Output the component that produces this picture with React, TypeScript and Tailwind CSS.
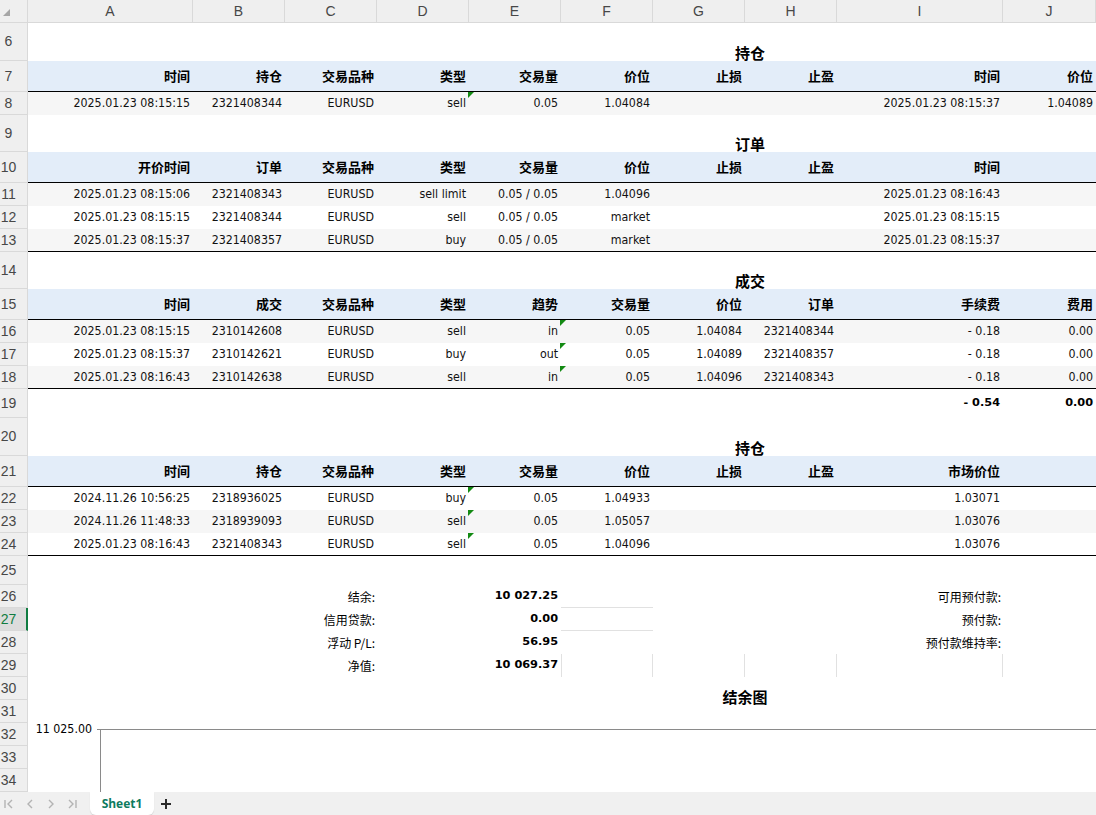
import React from 'react';

// column widths of A..J, in px
const GRID = 'grid grid-cols-[165px_92px_92px_92px_92px_92px_92px_92px_166px_93px]';
const LETTERS = ['A', 'B', 'C', 'D', 'E', 'F', 'G', 'H', 'I', 'J'];

const DATA_FONT = "font-['DejaVu_Sans_Condensed','DejaVu_Sans','Noto_Sans_CJK_SC',sans-serif] text-[12.3px] text-[#111]";
const HEAD_FONT = "font-['Noto_Sans_CJK_SC',sans-serif] font-bold text-[13px] text-black";
const UI_FONT = "font-['Liberation_Sans',Arial,sans-serif] text-[14px] text-[#474747]";

type CellVal = string | { t: string; b?: boolean; m?: boolean; cls?: string };

/** Small green triangle Excel paints in a cell corner */
const Marker = () => (
  <svg className="absolute top-0 right-[-5px] z-10" width="6" height="6" viewBox="0 0 6 6">
    <polygon points="0,0 6,0 0,6" fill="#138a13" />
  </svg>
);

const Cell: React.FC<{ v?: CellVal; head?: boolean }> = ({ v, head }) => {
  if (v === undefined || v === '') return <div />;
  const c = typeof v === 'string' ? { t: v } : v;
  const font = head
    ? HEAD_FONT
    : c.b
      ? "font-['DejaVu_Sans','Noto_Sans_CJK_SC',sans-serif] font-bold text-[11.3px] text-black"
      : DATA_FONT;
  return (
    <div className={`relative flex items-center justify-end pr-[3px] whitespace-nowrap ${font} ${c.cls ?? ''}`}>
      {c.t}
      {c.m && <Marker />}
    </div>
  );
};

const RowNum: React.FC<{ n: number; sel?: boolean }> = ({ n, sel }) => (
  <div
    className={`w-[28px] shrink-0 box-border flex items-center border-b border-[#d9d9d9] ${
      sel ? 'bg-[#dcdcdc] border-r-2 border-r-[#107c41]' : 'bg-[#efefef] border-r'
    }`}
  >
    <span
      className={`w-[17px] text-center font-['Liberation_Sans',Arial,sans-serif] text-[14px] ${
        sel ? 'text-[#107c41]' : 'text-[#474747]'
      }`}
    >
      {n}
    </span>
  </div>
);

const Row: React.FC<{ n: number; h: string; sel?: boolean; cls?: string; children?: React.ReactNode }> = ({
  n,
  h,
  sel,
  cls = '',
  children,
}) => (
  <div className={`flex ${h}`}>
    <RowNum n={n} sel={sel} />
    <div className={`flex-1 box-border ${cls}`}>{children}</div>
  </div>
);

const TitleRow: React.FC<{ n: number; h: string; title: string; w?: string; shift?: string }> = ({
  n,
  h,
  title,
  w = 'w-[1444px]',
  shift = '',
}) => (
  <Row n={n} h={h} cls="flex items-end overflow-visible">
    <div
      className={`${w} shrink-0 text-center leading-[16px] font-['Noto_Sans_CJK_SC',sans-serif] font-bold text-[15px] text-black ${shift}`}
    >
      {title}
    </div>
  </Row>
);

const HeadRow: React.FC<{ n: number; cells: string[] }> = ({ n, cells }) => (
  <Row n={n} h="h-[31px]" cls={`${GRID} bg-[#e3edf9] border-b border-black`}>
    {cells.map((c, i) => (
      <Cell key={i} v={c} head />
    ))}
  </Row>
);

const DataRow: React.FC<{ n: number; cells: CellVal[]; gray?: boolean; last?: boolean }> = ({
  n,
  cells,
  gray,
  last,
}) => (
  <Row
    n={n}
    h="h-[23px]"
    cls={`${GRID} ${gray ? 'bg-[#f6f6f6]' : 'bg-white'} ${last ? 'border-b border-black' : ''}`}
  >
    {cells.map((c, i) => (
      <Cell key={i} v={c} />
    ))}
  </Row>
);

const LABEL = "font-['Noto_Sans_CJK_SC',sans-serif] text-[12px] text-black";

const SumRow: React.FC<{ n: number; label: string; value: string; right?: string; fcls?: string; last?: boolean; sel?: boolean }> = ({
  n,
  label,
  value,
  right,
  fcls = '',
  last,
  sel,
}) => (
  <Row n={n} h="h-[23px]" sel={sel} cls={GRID}>
    <div />
    <div />
    <div className={`flex items-center justify-end pr-[2px] whitespace-nowrap ${LABEL}`}>{label}</div>
    <div />
    <Cell v={{ t: value, b: true }} />
    <div className={`box-border ${fcls}`} />
    <div className={last ? 'border-r border-[#e1e1e1]' : ''} />
    <div className={last ? 'border-r border-[#e1e1e1]' : ''} />
    <div
      className={`flex items-center justify-end pr-[2px] whitespace-nowrap ${LABEL} ${
        last ? 'border-r border-[#e1e1e1]' : ''
      }`}
    >
      {right}
    </div>
    <div />
  </Row>
);

const Nav: React.FC<{ d: string; bar?: 'l' | 'r' }> = ({ d, bar }) => (
  <svg width="12" height="12" viewBox="0 0 12 12" fill="none" stroke="#b3b3b3" strokeWidth="1.4">
    {bar === 'l' && <line x1="2" y1="2" x2="2" y2="10" />}
    {bar === 'r' && <line x1="10" y1="2" x2="10" y2="10" />}
    <path d={d} />
  </svg>
);

export default function App() {
  return (
    <div className="w-[1096px] h-[815px] overflow-hidden bg-white flex flex-col">
      {/* column letters */}
      <div className="flex h-[23px] shrink-0 bg-[#efefef]">
        <div className="w-[28px] shrink-0 box-border border-r border-b border-[#d9d9d9] relative">
          <svg className="absolute left-[3px] top-[9px]" width="7" height="7" viewBox="0 0 7 7">
            <polygon points="7,0 7,7 0,7" fill="#a6a6a6" />
          </svg>
        </div>
        <div className={`flex-1 ${GRID}`}>
          {LETTERS.map((l) => (
            <div
              key={l}
              className={`box-border border-r border-b border-[#d9d9d9] flex items-center justify-center ${UI_FONT}`}
            >
              {l}
            </div>
          ))}
        </div>
      </div>

      {/* positions */}
      <TitleRow n={6} h="h-[38px]" title="持仓" />
      <HeadRow n={7} cells={['时间', '持仓', '交易品种', '类型', '交易量', '价位', '止损', '止盈', '时间', '价位']} />
      <DataRow
        n={8}
        gray
        cells={['2025.01.23 08:15:15', '2321408344', 'EURUSD', { t: 'sell', m: true }, '0.05', '1.04084', '', '', '2025.01.23 08:15:37', '1.04089']}
      />

      {/* orders */}
      <TitleRow n={9} h="h-[37px]" title="订单" />
      <HeadRow n={10} cells={['开价时间', '订单', '交易品种', '类型', '交易量', '价位', '止损', '止盈', '时间', '']} />
      <DataRow
        n={11}
        gray
        cells={['2025.01.23 08:15:06', '2321408343', 'EURUSD', 'sell limit', '0.05 / 0.05', '1.04096', '', '', '2025.01.23 08:16:43', '']}
      />
      <DataRow
        n={12}
        cells={['2025.01.23 08:15:15', '2321408344', 'EURUSD', 'sell', '0.05 / 0.05', 'market', '', '', '2025.01.23 08:15:15', '']}
      />
      <DataRow
        n={13}
        gray
        last
        cells={['2025.01.23 08:15:37', '2321408357', 'EURUSD', 'buy', '0.05 / 0.05', 'market', '', '', '2025.01.23 08:15:37', '']}
      />

      {/* deals */}
      <TitleRow n={14} h="h-[37px]" title="成交" />
      <HeadRow n={15} cells={['时间', '成交', '交易品种', '类型', '趋势', '交易量', '价位', '订单', '手续费', '费用']} />
      <DataRow
        n={16}
        gray
        cells={['2025.01.23 08:15:15', '2310142608', 'EURUSD', 'sell', { t: 'in', m: true }, '0.05', '1.04084', '2321408344', '- 0.18', '0.00']}
      />
      <DataRow
        n={17}
        cells={['2025.01.23 08:15:37', '2310142621', 'EURUSD', 'buy', { t: 'out', m: true }, '0.05', '1.04089', '2321408357', '- 0.18', '0.00']}
      />
      <DataRow
        n={18}
        gray
        last
        cells={['2025.01.23 08:16:43', '2310142638', 'EURUSD', 'sell', { t: 'in', m: true }, '0.05', '1.04096', '2321408343', '- 0.18', '0.00']}
      />
      <Row n={19} h="h-[29px]" cls={GRID}>
        {['', '', '', '', '', '', '', ''].map((_, i) => (
          <div key={i} />
        ))}
        <Cell v={{ t: '- 0.54', b: true }} />
        <Cell v={{ t: '0.00', b: true }} />
      </Row>

      {/* open positions */}
      <TitleRow n={20} h="h-[38px]" title="持仓" />
      <HeadRow n={21} cells={['时间', '持仓', '交易品种', '类型', '交易量', '价位', '止损', '止盈', '市场价位', '']} />
      <DataRow
        n={22}
        cells={['2024.11.26 10:56:25', '2318936025', 'EURUSD', { t: 'buy', m: true }, '0.05', '1.04933', '', '', '1.03071', '']}
      />
      <DataRow
        n={23}
        gray
        cells={['2024.11.26 11:48:33', '2318939093', 'EURUSD', { t: 'sell', m: true }, '0.05', '1.05057', '', '', '1.03076', '']}
      />
      <DataRow
        n={24}
        last
        cells={['2025.01.23 08:16:43', '2321408343', 'EURUSD', { t: 'sell', m: true }, '0.05', '1.04096', '', '', '1.03076', '']}
      />
      <Row n={25} h="h-[29px]" />

      {/* summary */}
      <SumRow n={26} label="结余:" value="10 027.25" right="可用预付款:" fcls="border-b border-[#e1e1e1]" />
      <SumRow n={27} sel label="信用贷款:" value="0.00" right="预付款:" fcls="border-b border-[#e1e1e1]" />
      <SumRow n={28} label="浮动 P/L:" value="56.95" right="预付款维持率:" />
      <SumRow n={29} last label="净值:" value="10 069.37" fcls="border-l border-r border-[#e1e1e1]" />

      {/* balance chart */}
      <TitleRow n={30} h="h-[23px]" title="结余图" w="w-[1434px]" shift="mb-[-5px]" />
      <div className="relative">
        <Row n={31} h="h-[23px]" />
        <Row n={32} h="h-[23px]" />
        <Row n={33} h="h-[23px]" />
        <Row n={34} h="h-[23px]" />
        <div className="absolute left-[30px] right-0 top-0 bottom-0">
          <div className="absolute left-0 w-[62px] text-right top-[21px] leading-[16px] font-['DejaVu_Sans_Condensed','DejaVu_Sans',sans-serif] text-[12.3px] text-black whitespace-nowrap">
            11 025.00
          </div>
          <div className="absolute left-[67px] right-0 top-[29px] h-px bg-[#8a8a8a]" />
          <div className="absolute left-[70px] top-[29px] bottom-0 w-px bg-[#8a8a8a]" />
        </div>
      </div>

      {/* sheet tabs */}
      <div className="h-[23px] shrink-0 bg-[#f0f0f0] flex items-stretch">
        <div className="flex items-center gap-[9px] pl-[3px] w-[90px]">
          <Nav d="M9 2 L5 6 L9 10" bar="l" />
          <Nav d="M8 2 L4 6 L8 10" />
          <Nav d="M4 2 L8 6 L4 10" />
          <Nav d="M3 2 L7 6 L3 10" bar="r" />
        </div>
        <div className="w-[64px] bg-white rounded-b-[6px] shadow-[0_1px_1px_rgba(0,0,0,0.12)] flex items-center justify-center font-['Open_Sans',sans-serif] font-bold text-[12px] text-[#0f7b5f]">
          Sheet1
        </div>
        <div className="flex items-center pl-[7px]">
          <svg width="10" height="10" viewBox="0 0 10 10" stroke="#2b2b2b" strokeWidth="2">
            <line x1="5" y1="0" x2="5" y2="10" />
            <line x1="0" y1="5" x2="10" y2="5" />
          </svg>
        </div>
      </div>
    </div>
  );
}
